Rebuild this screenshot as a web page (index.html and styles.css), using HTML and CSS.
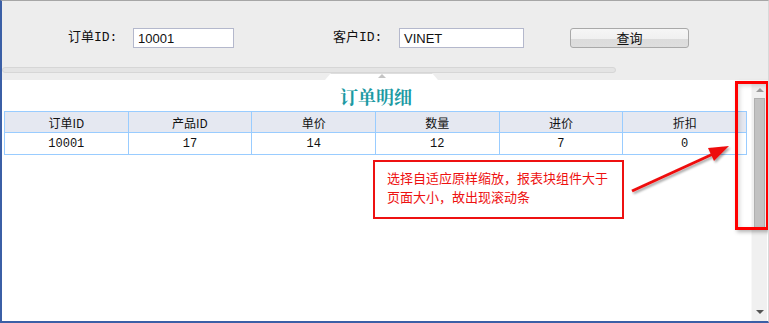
FILE: index.html
```html
<!DOCTYPE html>
<html lang="zh">
<head>
<meta charset="utf-8">
<link rel="stylesheet" href="styles.css">
</head>
<body>
<div class="window">
  <div class="toppanel">
    <div class="form">
      <span class="label l1">订单ID:</span>
      <div class="input i1">10001</div>
      <span class="label l2">客户ID:</span>
      <div class="input i2">VINET</div>
      <div class="button">查询</div>
    </div>
    <div class="splitter"></div>
    <div class="tabrow"><div class="tab"><span class="tri"></span></div></div>
  </div>
  <div class="content">
    <div class="main">
      <div class="title">订单明细</div>
      <table class="grid">
        <thead>
          <tr><th>订单ID</th><th>产品ID</th><th>单价</th><th>数量</th><th>进价</th><th>折扣</th></tr>
        </thead>
        <tbody>
          <tr><td>10001</td><td>17</td><td>14</td><td>12</td><td>7</td><td>0</td></tr>
        </tbody>
      </table>
    </div>
    <div class="scrollbar">
      <div class="arrow up"></div>
      <div class="thumb"></div>
      <div class="space"></div>
      <div class="arrow down"></div>
    </div>
    <div class="callout">选择自适应原样缩放，报表块组件大于<br>页面大小，故出现滚动条</div>
    <div class="highlight"></div>
    <svg class="pointer" width="769" height="323" viewBox="0 0 769 323">
      <defs>
        <filter id="sh" x="-20%" y="-20%" width="140%" height="140%">
          <feDropShadow dx="1.5" dy="2" stdDeviation="1.2" flood-color="#000" flood-opacity="0.35"/>
        </filter>
      </defs>
      <g filter="url(#sh)">
        <line x1="632" y1="191" x2="713" y2="154" stroke="#ee1111" stroke-width="3"/>
        <polygon points="729,146 708,148 714,161" fill="#ee1111"/>
      </g>
    </svg>
  </div>
</div>
</body>
</html>
```

FILE: styles.css
```css
html, body {
  margin: 0;
  padding: 0;
  background: #ffffff;
}
.window {
  position: relative;
  width: 769px;
  height: 323px;
  box-sizing: border-box;
  border-left: 2px solid #3b5fa6;
  border-bottom: 2px solid #3b5fa6;
  border-top: 1px solid #a6a6a6;
  border-right: 1px solid #d8d8d8;
  display: flex;
  flex-direction: column;
  font-family: "Noto Sans CJK SC", "DejaVu Sans", sans-serif;
  overflow: hidden;
}
.toppanel {
  height: 79px;
  background: #ededed;
  display: flex;
  flex-direction: column;
}
.form {
  display: flex;
  align-items: center;
  height: 20px;
  margin-top: 27px;
}
.label {
  font-family: "Liberation Mono", "Noto Sans CJK SC", monospace;
  font-size: 13px;
  color: #111;
  line-height: 20px;
}
.l1 { margin-left: 66px; width: 65px; }
.l2 { margin-left: 99px; width: 66px; }
.input {
  height: 20px;
  box-sizing: border-box;
  border: 1px solid #b4b8cc;
  background: #ffffff;
  font-family: "Liberation Sans", "Noto Sans CJK SC", sans-serif;
  font-size: 13px;
  line-height: 20px;
  padding-left: 4px;
  color: #111;
}
.i1 { width: 101px; }
.i2 { width: 125px; }
.button {
  margin-left: 46px;
  width: 119px;
  height: 20px;
  box-sizing: border-box;
  border: 1px solid #a9a9a9;
  border-radius: 3px;
  background: linear-gradient(#f6f6f6 0%, #f0f0f0 55%, #dcdcdc 56%, #dedede 100%);
  text-align: center;
  font-size: 13px;
  line-height: 17px;
  color: #111;
}
.splitter {
  margin-top: 19px;
  margin-left: 0;
  width: 614px;
  height: 6px;
  box-sizing: border-box;
  border: 1px solid #d6d6d6;
  border-radius: 3px;
  background: #e4e4e4;
}
.tabrow {
  flex: 1;
  display: flex;
  align-items: flex-end;
}
.tab {
  margin-left: 323px;
  width: 113px;
  height: 6px;
  background: #ffffff;
  clip-path: polygon(6px 0, 107px 0, 113px 100%, 0 100%);
  position: relative;
  border-top: 1px solid #dedede;
}
.tri {
  position: absolute;
  left: 53px;
  top: 0;
  width: 0;
  height: 0;
  border-left: 4px solid transparent;
  border-right: 4px solid transparent;
  border-bottom: 4px solid #c4c4c4;
}
.content {
  flex: 1;
  position: relative;
  display: flex;
  background: #ffffff;
}
.main {
  flex: 1;
  display: flex;
  flex-direction: column;
  padding-left: 2px;
  padding-right: 3px;
}
.title {
  text-align: center;
  font-family: "Noto Serif CJK SC", "Noto Sans CJK SC", serif;
  font-weight: bold;
  font-size: 18px;
  color: #1b9aa3;
  height: 31px;
  line-height: 33px;
  padding-left: 0;
}
.grid {
  width: 743px;
  border-collapse: collapse;
  table-layout: fixed;
  font-family: "Noto Sans CJK SC", sans-serif;
  font-size: 12px;
  color: #111;
}
.grid th, .grid td {
  border: 1px solid #99ccff;
  text-align: center;
  padding: 0;
  font-weight: normal;
}
.grid th {
  background: #e5e8f1;
  height: 20px;
}
.grid td {
  height: 21px;
  font-family: "Liberation Mono", monospace;
}
.scrollbar {
  width: 15px;
  margin-right: 1px;
  margin-top: 3px;
  background: #f0f0f0;
  border-left: 1px solid #f8f8f8;
  display: flex;
  flex-direction: column;
  align-items: center;
}
.arrow {
  width: 0;
  height: 0;
  border-left: 4px solid transparent;
  border-right: 4px solid transparent;
}
.up {
  margin-top: 5px;
  border-bottom: 4px solid #9c9c9c;
}
.thumb {
  margin-top: 6px;
  width: 11px;
  height: 132px;
  box-sizing: border-box;
  background: #c2c2c2;
  border: 1px solid #b0b0b0;
}
.space { flex: 1; }
.down {
  margin-bottom: 7px;
  border-top: 4px solid #555;
}
.callout {
  position: absolute;
  left: 371px;
  top: 80px;
  width: 251px;
  height: 59px;
  box-sizing: border-box;
  border: 2px solid #ee1111;
  color: #ee1111;
  font-family: "Noto Sans CJK SC", sans-serif;
  font-size: 13px;
  line-height: 19px;
  padding: 6px 0 0 12px;
  background: #ffffff;
}
.highlight {
  position: absolute;
  left: 733px;
  top: 1px;
  width: 34px;
  height: 149px;
  box-sizing: border-box;
  border: 3px solid #ff0000;
  box-shadow: 2px 2px 4px rgba(0,0,0,0.3), inset 2px 2px 4px rgba(0,0,0,0.15);
}
.pointer {
  position: absolute;
  left: -2px;
  top: -80px;
  pointer-events: none;
}
```
